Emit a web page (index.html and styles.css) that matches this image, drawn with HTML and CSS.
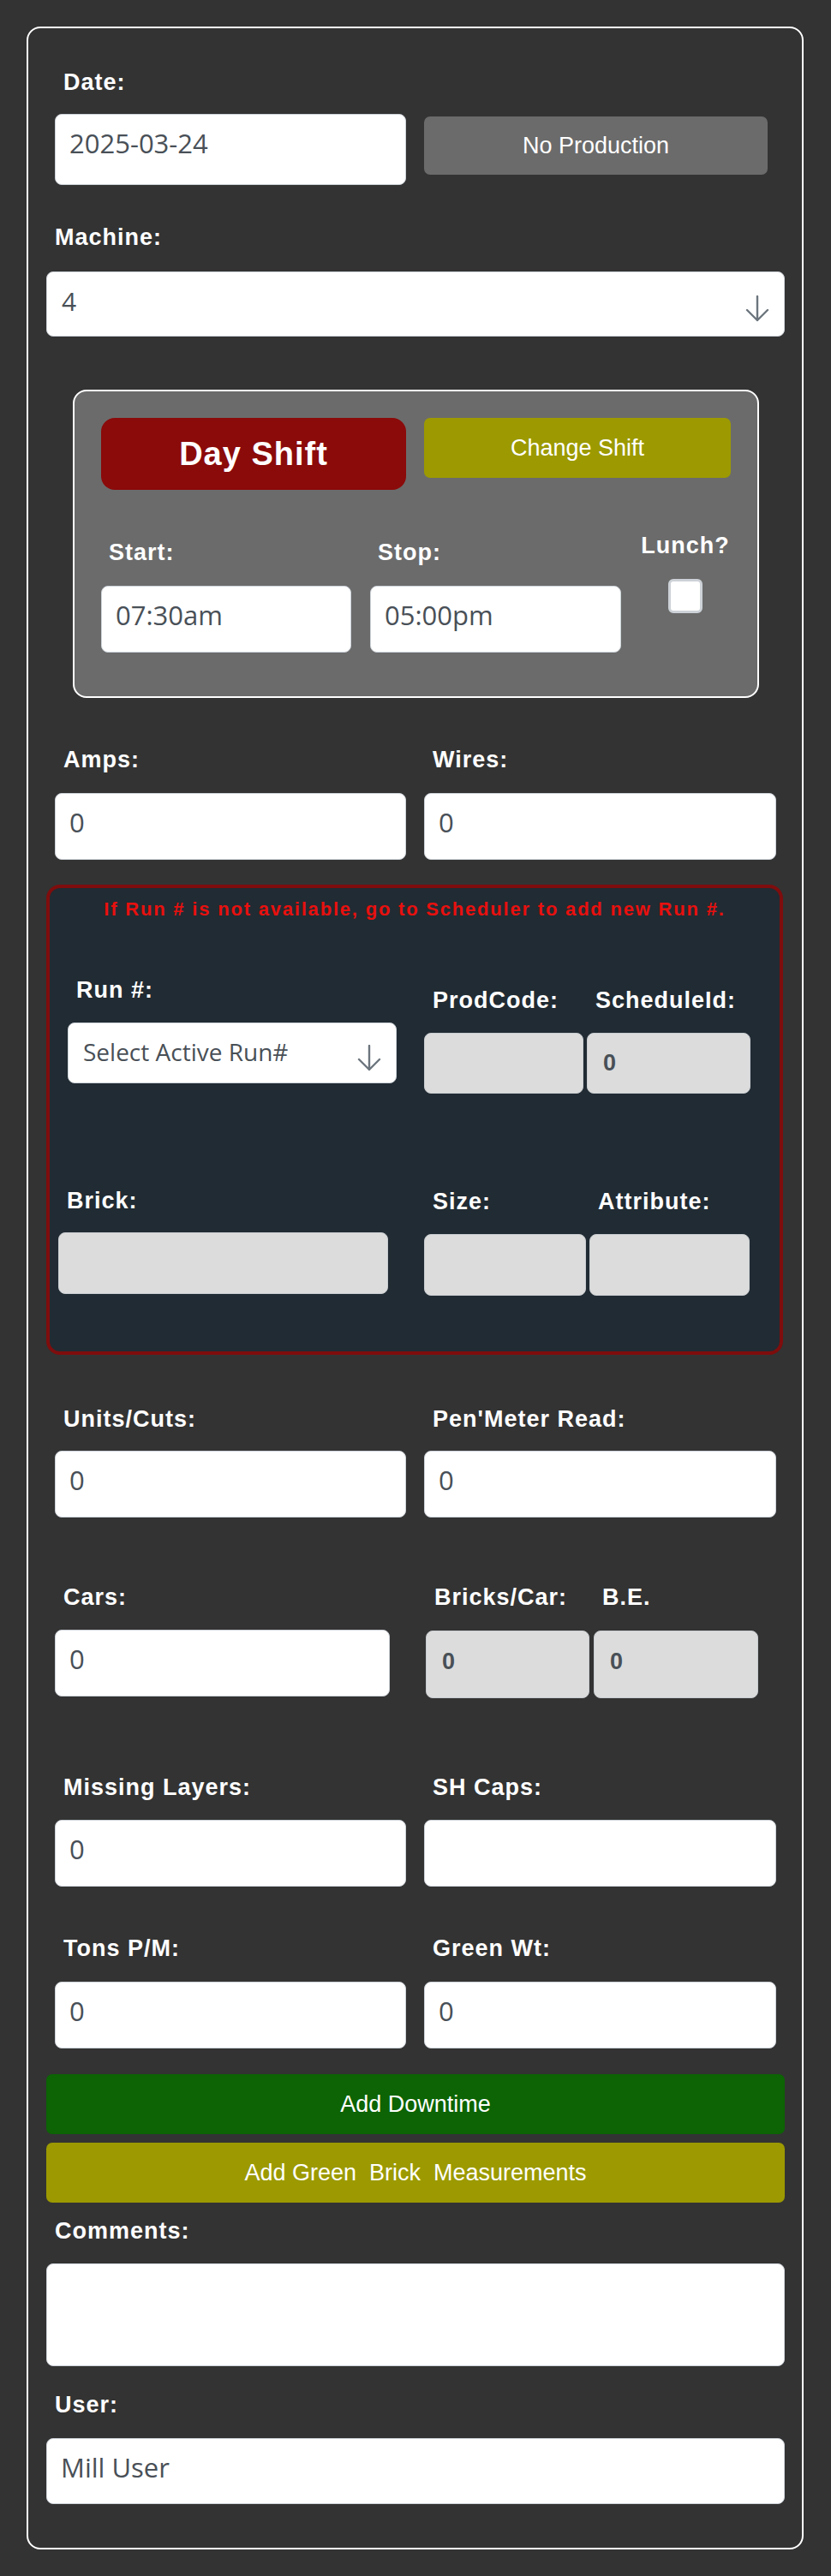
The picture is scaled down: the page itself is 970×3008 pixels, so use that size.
FILE: index.html
```html
<!DOCTYPE html>
<html>
<head>
<meta charset="utf-8">
<title>Production Entry</title>
<link rel="stylesheet" href="styles.css">
</head>
<body>
<form class="card">
  <div class="pair">
    <div class="col">
      <label class="lbl">Date:</label>
      <input class="field field-date" type="text" value="2025-03-24">
    </div>
    <div class="col">
      <button type="button" class="btn btn-gray btn-noprod">No Production</button>
    </div>
  </div>

  <label class="lbl machine-label">Machine:</label>
  <div class="select-wrap machine-wrap">
    <select class="field select-field machine-select"><option>4</option></select>
    <svg class="sel-arrow" width="28" height="31" viewBox="0 0 28 31"><path d="M14 1V29M2 17l12 12 12-12" stroke="#6c757d" stroke-width="2.4" fill="none" stroke-linecap="round" stroke-linejoin="round"/></svg>
  </div>

  <div class="shift-box">
    <div class="shift-top">
      <button type="button" class="btn btn-day">Day Shift</button>
      <button type="button" class="btn btn-olive btn-change">Change Shift</button>
    </div>
    <div class="shift-times">
      <div class="col">
        <label class="lbl time-label">Start:</label>
        <input class="field time-field" type="text" value="07:30am">
      </div>
      <div class="col">
        <label class="lbl time-label">Stop:</label>
        <input class="field time-field" type="text" value="05:00pm">
      </div>
      <div class="col lunch-col">
        <label class="lbl lunch-label">Lunch?</label>
        <input class="lunch-check" type="checkbox">
      </div>
    </div>
  </div>

  <div class="pair amps-pair">
    <div class="col">
      <label class="lbl">Amps:</label>
      <input class="field field-std" type="text" value="0">
    </div>
    <div class="col">
      <label class="lbl">Wires:</label>
      <input class="field field-std" type="text" value="0">
    </div>
  </div>

  <div class="run-box">
    <p class="run-note">If Run # is not available, go to Scheduler to add new Run #.</p>
    <div class="run-row run-row1">
      <div class="run-left1">
        <label class="lbl">Run #:</label>
        <div class="select-wrap run-wrap">
          <select class="field select-field run-select"><option>Select Active Run#</option></select>
          <svg class="sel-arrow" width="28" height="31" viewBox="0 0 28 31"><path d="M14 1V29M2 17l12 12 12-12" stroke="#6c757d" stroke-width="2.4" fill="none" stroke-linecap="round" stroke-linejoin="round"/></svg>
        </div>
      </div>
      <div class="run-right1">
        <div class="col">
          <label class="lbl">ProdCode:</label>
          <input class="ro-field run-ro" type="text" value="" readonly>
        </div>
        <div class="col">
          <label class="lbl">ScheduleId:</label>
          <input class="ro-field run-ro" type="text" value="0" readonly>
        </div>
      </div>
    </div>
    <div class="run-row run-row2">
      <div class="run-left2">
        <label class="lbl">Brick:</label>
        <input class="ro-field brick-ro" type="text" value="" readonly>
      </div>
      <div class="run-right2">
        <div class="col">
          <label class="lbl">Size:</label>
          <input class="ro-field run-ro2" type="text" value="" readonly>
        </div>
        <div class="col">
          <label class="lbl">Attribute:</label>
          <input class="ro-field run-ro2" type="text" value="" readonly>
        </div>
      </div>
    </div>
  </div>

  <div class="pair units-pair">
    <div class="col">
      <label class="lbl">Units/Cuts:</label>
      <input class="field field-std units-field" type="text" value="0">
    </div>
    <div class="col">
      <label class="lbl">Pen'Meter Read:</label>
      <input class="field field-std units-field" type="text" value="0">
    </div>
  </div>

  <div class="pair cars-pair">
    <div class="col">
      <label class="lbl">Cars:</label>
      <input class="field field-std cars-field" type="text" value="0">
    </div>
    <div class="cars-sub">
      <div class="col">
        <label class="lbl">Bricks/Car:</label>
        <input class="ro-field cars-ro" type="text" value="0" readonly>
      </div>
      <div class="col">
        <label class="lbl">B.E.</label>
        <input class="ro-field cars-ro" type="text" value="0" readonly>
      </div>
    </div>
  </div>

  <div class="pair missing-pair">
    <div class="col">
      <label class="lbl">Missing Layers:</label>
      <input class="field field-std" type="text" value="0">
    </div>
    <div class="col">
      <label class="lbl">SH Caps:</label>
      <input class="field field-std" type="text" value="">
    </div>
  </div>

  <div class="pair tons-pair">
    <div class="col">
      <label class="lbl">Tons P/M:</label>
      <input class="field field-std tons-field" type="text" value="0">
    </div>
    <div class="col">
      <label class="lbl">Green Wt:</label>
      <input class="field field-std tons-field" type="text" value="0">
    </div>
  </div>

  <button type="button" class="btn btn-green btn-wide btn-downtime">Add Downtime</button>
  <button type="button" class="btn btn-olive btn-wide btn-measure">Add Green&nbsp; Brick&nbsp; Measurements</button>

  <label class="lbl comments-label">Comments:</label>
  <textarea class="field comments-field"></textarea>

  <label class="lbl user-label">User:</label>
  <input class="field user-field" type="text" value="Mill User">
</form>
</body>
</html>
```

FILE: styles.css
```css
html, body {
  margin: 0;
  background: #333333;
}

body {
  padding: 31px 32px 31px 31px;
  font-family: "Liberation Sans", Arial, sans-serif;
}

.card {
  box-sizing: border-box;
  width: 907px;
  border: 2px solid #ffffff;
  border-radius: 16px;
  padding: 47px 20px 51px 21px;
  margin: 0;
}

.lbl {
  display: block;
  font-family: "Liberation Sans", Arial, sans-serif;
  font-weight: bold;
  font-size: 27px;
  line-height: 32px;
  letter-spacing: 1px;
  color: #ffffff;
  padding-left: 10px;
  white-space: nowrap;
}

.pair {
  display: grid;
  grid-template-columns: 410px 411px;
  column-gap: 21px;
  padding: 0 10px;
  align-items: start;
}

.col {
  display: flex;
  flex-direction: column;
  min-width: 0;
}

.field {
  display: block;
  box-sizing: border-box;
  width: 100%;
  margin: 0;
  border: 1px solid #ced4da;
  border-radius: 8px;
  background: #ffffff;
  font-family: "Open Sans", "Noto Sans", sans-serif;
  font-size: 31px;
  color: #495057;
  padding: 0 16px 10px 16px;
  outline: none;
}

.field-date {
  height: 83px;
  margin-top: 21px;
  padding-bottom: 15px;
}

.field-std {
  height: 78px;
  margin-top: 23px;
}

.units-field {
  margin-top: 21px;
}

.cars-field {
  margin-top: 22px;
  width: 391px;
}

.missing-pair .field-std {
  margin-top: 22px;
}

.btn {
  display: block;
  box-sizing: border-box;
  border: 0;
  margin: 0;
  padding: 0;
  color: #ffffff;
  font-family: "Liberation Sans", Arial, sans-serif;
  font-size: 27px;
  border-radius: 7px;
  text-align: center;
}

.btn-gray { background: #6b6b6b; }
.btn-olive { background: #9c9a00; }
.btn-green { background: #0c6404; }

.btn-noprod {
  width: 401px;
  height: 68px;
  margin-top: 56px;
}

.machine-label {
  margin-top: 45px;
}

.select-wrap {
  position: relative;
}

.select-field {
  -webkit-appearance: none;
  appearance: none;
  padding-left: 17px;
}

.machine-wrap {
  margin-top: 24px;
}

.machine-select {
  height: 76px;
  padding-bottom: 8px;
  font-size: 30px;
}

.sel-arrow {
  position: absolute;
  right: 18px;
  top: calc(50% - 10px);
  pointer-events: none;
}

/* Shift panel */
.shift-box {
  box-sizing: border-box;
  margin: 62px 30px 0 31px;
  border: 2px solid #ffffff;
  border-radius: 16px;
  background: #6b6b6b;
  padding: 31px 31px 51px 31px;
}

.shift-top {
  display: grid;
  grid-template-columns: 356px 358px;
  column-gap: 21px;
  align-items: start;
}

.btn-day {
  height: 84px;
  background: #8b0a0a;
  border-radius: 16px;
  font-weight: bold;
  font-size: 38px;
  letter-spacing: 1px;
}

.btn-change {
  height: 70px;
}

.shift-times {
  display: grid;
  grid-template-columns: 292px 293px 106px;
  column-gap: 22px;
  margin-top: 49px;
  align-items: start;
}

.time-label {
  margin-top: 8px;
  padding-left: 9px;
}

.time-field {
  height: 78px;
  margin-top: 23px;
}

.lunch-col {
  align-items: center;
}

.lunch-label {
  padding-left: 0;
  text-align: center;
}

.lunch-check {
  -webkit-appearance: none;
  appearance: none;
  box-sizing: border-box;
  width: 40px;
  height: 40px;
  margin: 23px 0 0 0;
  background: #ffffff;
  border: 3px solid #cdd2d8;
  border-radius: 6px;
}

.amps-pair {
  margin-top: 56px;
}

/* Run panel */
.run-box {
  box-sizing: border-box;
  margin: 29px 2px 0 0;
  border: 4px solid #7f0d0d;
  border-radius: 16px;
  background: #212b33;
  padding: 12px 0 65px 0;
}

.run-note {
  margin: 0;
  text-align: center;
  font-weight: bold;
  font-size: 22px;
  line-height: 26px;
  letter-spacing: 1.8px;
  color: #e8100e;
  white-space: nowrap;
}

.run-row {
  display: flex;
  align-items: flex-start;
}

.run-row1 {
  margin-top: 65px;
}

.run-left1 {
  margin-left: 21px;
  width: 384px;
}

.run-wrap {
  margin-top: 22px;
}

.run-select {
  height: 71px;
  font-size: 28px;
  padding-bottom: 3px;
}

.run-right1 {
  margin-left: 32px;
  display: grid;
  grid-template-columns: 186px 191px;
  column-gap: 4px;
  padding-top: 12px;
}

.ro-field {
  display: block;
  box-sizing: border-box;
  width: 100%;
  margin: 0;
  border: 1px solid #c9cdd1;
  border-radius: 8px;
  background: #dcdcdc;
  font-family: "Liberation Sans", Arial, sans-serif;
  font-weight: bold;
  font-size: 27px;
  color: #495057;
  padding: 0 10px 0 18px;
  outline: none;
}

.run-ro {
  height: 71px;
  margin-top: 22px;
}

.run-row2 {
  margin-top: 109px;
}

.run-left2 {
  margin-left: 10px;
  width: 385px;
}

.brick-ro {
  height: 72px;
  margin-top: 21px;
}

.run-right2 {
  margin-left: 42px;
  display: grid;
  grid-template-columns: 189px 187px;
  column-gap: 4px;
  padding-top: 1px;
}

.run-ro2 {
  height: 72px;
  margin-top: 22px;
}

/* Lower fields */
.units-pair {
  margin-top: 59px;
}

.cars-pair {
  margin-top: 77px;
}

.cars-sub {
  display: grid;
  grid-template-columns: 191px 192px;
  column-gap: 5px;
  padding-left: 2px;
}

.cars-ro {
  height: 79px;
  margin-top: 23px;
  padding-bottom: 6px;
}

.missing-pair {
  margin-top: 88px;
}

.tons-pair {
  margin-top: 56px;
}

.btn-wide {
  width: 100%;
  height: 70px;
}

.btn-downtime {
  margin-top: 30px;
}

.btn-measure {
  margin-top: 10px;
}

.comments-label {
  margin-top: 17px;
}

.comments-field {
  height: 120px;
  margin-top: 22px;
  resize: none;
  padding: 10px 16px;
}

.user-label {
  margin-top: 29px;
}

.user-field {
  height: 77px;
  margin-top: 23px;
  padding-bottom: 9px;
}
```
